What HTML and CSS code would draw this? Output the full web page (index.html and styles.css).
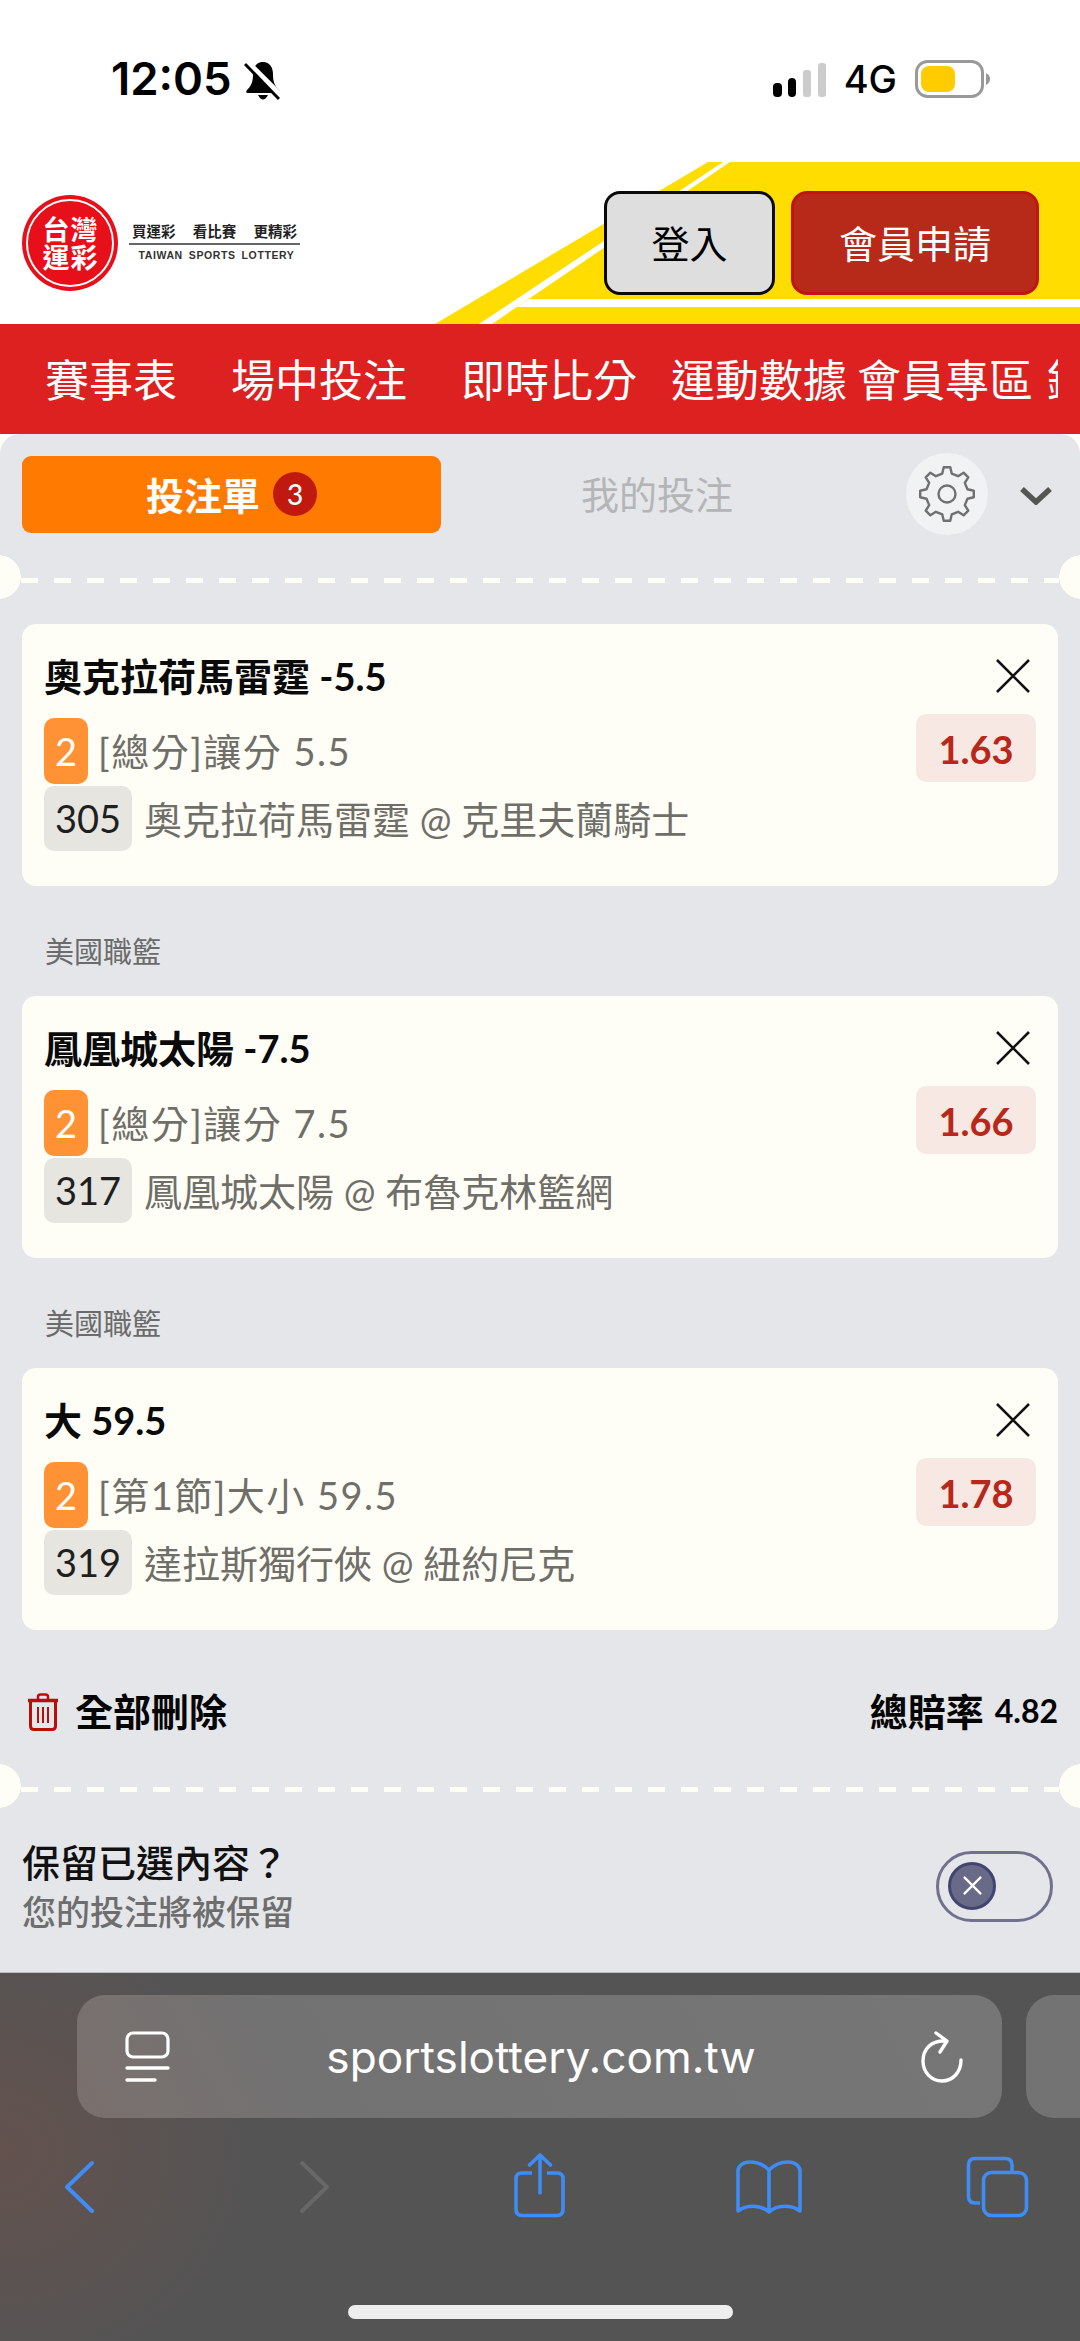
FILE: index.html
```html
<!DOCTYPE html>
<html lang="zh-Hant">
<head>
<meta charset="utf-8">
<title>台灣運彩 投注單</title>
<link rel="stylesheet" href="styles.css">
</head>
<body>
<div class="screen">
  <div class="status">
    <div class="status-left">
      <span class="time">12:05</span>
      <svg class="bell" viewBox="0 0 36 40"><path d="M19 1C12 1 9 7 9 13C9 20 8 24 3 29Q1 32 4 32H34Q37 32 35 29C30 24 29 20 29 13C29 7 26 1 19 1Z" fill="#000"/><path d="M14 34Q19 43 24 34Z" fill="#000"/><path d="M3 1L37 35" stroke="#fff" stroke-width="6"/><path d="M1 3L35 38" stroke="#000" stroke-width="3"/></svg>
    </div>
    <div class="status-right">
      <svg class="signal" viewBox="0 0 53 34"><rect x="0" y="20" width="9" height="14" rx="4" fill="#000"/><rect x="15" y="15" width="8" height="19" rx="4" fill="#000"/><rect x="30" y="7" width="8" height="27" rx="3" fill="#ccc"/><rect x="45" y="0" width="8" height="34" rx="3" fill="#ccc"/></svg>
      <span class="net">4G</span>
      <svg class="battery" viewBox="0 0 76 38"><rect x="1.5" y="1.5" width="66" height="35" rx="11" fill="none" stroke="#999" stroke-width="3"/><rect x="6" y="6" width="34" height="26" rx="8" fill="#fc0"/><path d="M71 13Q75 15 75 19Q75 23 71 25Z" fill="#999"/></svg>
    </div>
  </div>

  <header class="site-head">
    <svg class="head-art" viewBox="0 0 1080 162" preserveAspectRatio="none"><polygon points="708,0 1080,0 1080,162 435,162" fill="#ffdd00"/><polygon points="723,0 730,0 492,162 479,162" fill="#fff"/><polygon points="529,137 1080,137 1080,145 517,145" fill="#fff"/></svg>
    <div class="logo">
      <div class="seal"><div class="seal-ring"><span class="seal-line">台灣</span><span class="seal-line">運彩</span></div></div>
      <div class="logo-text">
        <div class="slogan"><span>買運彩</span><span>看比賽</span><span>更精彩</span></div>
        <div class="en">TAIWAN SPORTS LOTTERY</div>
      </div>
    </div>
    <div class="head-btns">
      <div class="btn btn-login">登入</div>
      <div class="btn btn-join">會員申請</div>
    </div>
  </header>

  <nav class="nav">
    <div class="nav-inner">
      <span class="n1">賽事表</span>
      <span class="n2">場中投注</span>
      <span class="n3">即時比分</span>
      <span class="n4">運動數據</span>
      <span class="n5">會員專區</span>
      <span class="n6">銷售據點</span>
    </div>
  </nav>

  <main class="panel">
    <div class="tabs">
      <div class="tab-on"><span class="tab-t">投注單</span><span class="badge">3</span></div>
      <div class="tab-off">我的投注</div>
      <div class="gear">
        <svg viewBox="-30 -30 60 60"><polygon points="20.46,-4.72 26.8,-3.29 26.8,3.29 20.46,4.72 17.81,11.13 21.28,16.62 16.62,21.28 11.13,17.81 4.72,20.46 3.29,26.8 -3.29,26.8 -4.72,20.46 -11.13,17.81 -16.62,21.28 -21.28,16.62 -17.81,11.13 -20.46,4.72 -26.8,3.29 -26.8,-3.29 -20.46,-4.72 -17.81,-11.13 -21.28,-16.62 -16.62,-21.28 -11.13,-17.81 -4.72,-20.46 -3.29,-26.8 3.29,-26.8 4.72,-20.46 11.13,-17.81 16.62,-21.28 21.28,-16.62 17.81,-11.13" fill="none" stroke="#707070" stroke-width="2.4" stroke-linejoin="round"/><circle r="8.5" fill="none" stroke="#707070" stroke-width="2.4"/></svg>
      </div>
      <svg class="chev" viewBox="0 0 32 18"><path d="M2 2L16 15L30 2" fill="none" stroke="#555" stroke-width="5.5"/></svg>
    </div>

    <div class="divider"></div>

    <section class="card card-first">
      <div class="card-title"><h2>奧克拉荷馬雷霆 -5.5</h2>
        <svg class="close" viewBox="0 0 34 34"><path d="M1 1L33 33M33 1L1 33" stroke="#111" stroke-width="2.6"/></svg></div>
      <div class="card-body">
        <div class="card-lines">
          <div class="line"><span class="chip-o">2</span><span class="ltext ltext-a">[總分]讓分 5.5</span></div>
          <div class="line"><span class="chip-g">305</span><span class="ltext">奧克拉荷馬雷霆 @ 克里夫蘭騎士</span></div>
        </div>
        <div class="odds">1.63</div>
      </div>
    </section>

    <div class="league">美國職籃</div>
    <section class="card">
      <div class="card-title"><h2>鳳凰城太陽 -7.5</h2>
        <svg class="close" viewBox="0 0 34 34"><path d="M1 1L33 33M33 1L1 33" stroke="#111" stroke-width="2.6"/></svg></div>
      <div class="card-body">
        <div class="card-lines">
          <div class="line"><span class="chip-o">2</span><span class="ltext ltext-a">[總分]讓分 7.5</span></div>
          <div class="line"><span class="chip-g">317</span><span class="ltext">鳳凰城太陽 @ 布魯克林籃網</span></div>
        </div>
        <div class="odds">1.66</div>
      </div>
    </section>

    <div class="league">美國職籃</div>
    <section class="card">
      <div class="card-title"><h2>大 59.5</h2>
        <svg class="close" viewBox="0 0 34 34"><path d="M1 1L33 33M33 1L1 33" stroke="#111" stroke-width="2.6"/></svg></div>
      <div class="card-body">
        <div class="card-lines">
          <div class="line"><span class="chip-o">2</span><span class="ltext ltext-a">[第1節]大小 59.5</span></div>
          <div class="line"><span class="chip-g">319</span><span class="ltext">達拉斯獨行俠 @ 紐約尼克</span></div>
        </div>
        <div class="odds">1.78</div>
      </div>
    </section>

    <div class="totals">
      <div class="del">
        <svg class="trash" viewBox="0 0 32 38"><path d="M11 7V4Q11 1.5 13.5 1.5H18.500Q21 1.500 21 4V7" fill="none" stroke="#b80f0a" stroke-width="2.500"/><path d="M1 7.500H31" stroke="#b80f0a" stroke-width="3.500"/><path d="M3.500 9V33Q3.500 36.500 7 36.500H25Q28.500 36.500 28.500 33V9" fill="none" stroke="#b80f0a" stroke-width="3"/><path d="M11 14V30M16 14V30M21 14V30" stroke="#b80f0a" stroke-width="2"/></svg>
        <span class="del-t">全部刪除</span>
      </div>
      <div class="total"><span class="total-l">總賠率</span> <span class="total-v">4.82</span></div>
    </div>

    <div class="divider divider-2"></div>

    <div class="keep">
      <div class="keep-text">
        <div class="keep-t">保留已選內容？</div>
        <div class="keep-s">您的投注將被保留</div>
      </div>
      <div class="toggle"><div class="knob"><svg viewBox="0 0 22 22"><path d="M2 2L20 20M20 2L2 20" stroke="#fff" stroke-width="2.4"/></svg></div></div>
    </div>
  </main>

  <footer class="browser">
    <div class="url-row">
      <div class="url-bar">
        <svg class="page-ic" viewBox="0 0 46 52"><rect x="2" y="2" width="41" height="24" rx="6" fill="none" stroke="#fff" stroke-width="3.200"/><path d="M2 37H43" stroke="#fff" stroke-width="3.400" stroke-linecap="round"/><path d="M2 49H30" stroke="#fff" stroke-width="3.400" stroke-linecap="round"/></svg>
        <span class="url">sportslottery.com.tw</span>
        <svg class="reload" viewBox="0 0 44 52"><path d="M24 10C11 10 3 18 3 30C3 41 11 50 22 50C33 50 41 41 41 29" fill="none" stroke="#fff" stroke-width="3.400" stroke-linecap="round"/><path d="M16 2L27 10L20 21" fill="none" stroke="#fff" stroke-width="3.400" stroke-linecap="round" stroke-linejoin="round"/></svg>
      </div>
      <div class="url-next"></div>
    </div>
    <div class="tools">
      <svg class="t-back" viewBox="62 2150 34 70"><path d="M92 2163L67 2187L92 2211" fill="none" stroke="#3f8cf5" stroke-width="4" stroke-linecap="round" stroke-linejoin="round"/></svg>
      <svg class="t-fwd" viewBox="298 2150 34 70"><path d="M302 2163L327 2187L302 2211" fill="none" stroke="#686868" stroke-width="4" stroke-linecap="round" stroke-linejoin="round"/></svg>
      <svg class="t-share" viewBox="510 2150 60 70"><path d="M532 2173H522Q516 2173 516 2179V2209Q516 2215.500 522 2215.500H557Q563 2215.500 563 2209V2179Q563 2173 557 2173H547" fill="none" stroke="#3f8cf5" stroke-width="3.600"/><path d="M540 2193V2156M529.500 2165L540 2155L550.500 2165" fill="none" stroke="#3f8cf5" stroke-width="3.600" stroke-linecap="round" stroke-linejoin="round"/></svg>
      <svg class="t-book" viewBox="733 2150 72 70"><path d="M769 2170C762 2163 755 2162 750 2162C743 2162 738 2166 738 2171V2211C746 2205 760 2204 769 2212C778 2204 792 2205 800 2211V2171C800 2166 795 2162 788 2162C783 2162 776 2163 769 2170V2212" fill="none" stroke="#3f8cf5" stroke-width="3.600" stroke-linejoin="round" stroke-linecap="round"/></svg>
      <svg class="t-tabs" viewBox="963 2150 68 70"><path d="M980 2203H975Q968.500 2203 968.500 2196V2165Q968.500 2158.500 975 2158.500H1005Q1012 2158.500 1012 2165V2171" fill="none" stroke="#3f8cf5" stroke-width="3.600"/><rect x="983.500" y="2172.500" width="43" height="43" rx="8" fill="none" stroke="#3f8cf5" stroke-width="3.600"/></svg>
    </div>
    <div class="home"></div>
  </footer>
</div>
</body>
</html>
```

FILE: styles.css
```css
* { box-sizing: border-box; }
html, body { margin: 0; padding: 0; }
body { width: 1080px; height: 2341px; overflow: hidden; background: #fffef6; font-family: "Noto Sans CJK TC", sans-serif; }
.screen { width: 1080px; height: 2341px; display: flex; flex-direction: column; overflow: hidden; }

/* status bar */
.status { height: 162px; background: #fff; display: flex; justify-content: space-between; padding: 55px 89px 0 111px; align-items: flex-start; }
.status-left, .status-right { display: flex; align-items: center; height: 48px; }
.time { font: 600 45.500px/48px Inter, sans-serif; color: #000; letter-spacing: 0; }
.bell { width: 36px; height: 40px; margin-left: 12px; margin-top: 3px; }
.signal { width: 53px; height: 34px; margin-top: 2px; }
.net { font: 500 38px/48px Inter, sans-serif; color: #000; margin-left: 18px; margin-right: 18px; }
.battery { width: 76px; height: 38px; }

/* site header */
.site-head { position: relative; height: 162px; background: #fff; display: flex; justify-content: space-between; align-items: center; padding: 0 41px 0 22px; }
.head-art { position: absolute; left: 0; top: 0; width: 1080px; height: 162px; }
.logo { position: relative; display: flex; align-items: center; }
.seal { width: 96px; height: 96px; border-radius: 50%; background: #e60f1a; display: flex; align-items: center; justify-content: center; }
.seal-ring { width: 88px; height: 88px; border-radius: 50%; border: 2px solid #fff; display: flex; flex-direction: column; align-items: center; justify-content: center; color: #fff; font-weight: 700; font-size: 27px; }
.seal-line { display: block; height: 28px; line-height: 28px; letter-spacing: 1px; padding-left: 1px; }
.logo-text { margin-left: 11px; width: 171px; }
.slogan { display: flex; justify-content: space-between; padding: 0 3px 0 3px; font-size: 14.500px; font-weight: 700; line-height: 18px; color: #222; border-bottom: 2px solid #666; height: 23px; }
.en { font: 700 10.500px/20px "Liberation Sans", sans-serif; color: #333; text-align: center; letter-spacing: 0.600px; word-spacing: 2.500px; white-space: nowrap; padding-left: 4px; }
.head-btns { position: relative; display: flex; gap: 16px; }
.btn { height: 104px; display: flex; align-items: center; justify-content: center; font-size: 38px; border-radius: 16px; padding-bottom: 4px; }
.btn-login { width: 171px; background: #dedede; border: 3px solid #0a0a0a; color: #000; }
.btn-join { width: 248px; background: #b72a1a; border: 3px solid #c0150f; color: #fff; }

/* nav */
.nav { height: 110px; background: #dd2020; padding: 0 22px; flex-shrink: 0; }
.nav-inner { height: 110px; overflow: hidden; display: flex; align-items: center; white-space: nowrap; color: #fff; font-size: 44px; line-height: 60px; padding-bottom: 2px; }
.nav-inner span { flex-shrink: 0; }
.n1 { margin-left: 23px; }
.n2 { margin-left: 54px; }
.n3 { margin-left: 54px; }
.n4 { margin-left: 34px; }
.n5 { margin-left: 10px; }
.n6 { margin-left: 14px; }

/* panel */
.panel { height: 1538px; background: #e4e6e9; border-radius: 20px 20px 0 0; padding-top: 19px; flex-shrink: 0; overflow: hidden; }
.tabs { display: flex; align-items: center; height: 82px; padding-left: 22px; }
.tab-on { width: 419px; height: 77px; background: #ff7a00; border-radius: 9px; color: #fff; font-weight: 700; font-size: 38px; display: flex; align-items: center; justify-content: center; }
.tab-t { padding-bottom: 2px; }
.badge { width: 44px; height: 44px; border-radius: 50%; background: #c01a10; color: #fff; font: 500 28px/44px Lato, sans-serif; text-align: center; margin-left: 13px; }
.tab-off { width: 432px; text-align: center; color: #b4b5b7; font-size: 38px; font-weight: 400; padding-bottom: 3px; }
.gear { width: 82px; height: 82px; border-radius: 50%; background: #f1f2f3; margin-left: 33px; display: flex; align-items: center; justify-content: center; }
.gear svg { width: 60px; height: 60px; }
.chev { width: 32px; height: 18px; margin-left: 32px; margin-top: 4px; }

.divider { position: relative; height: 44px; margin-top: 20px; }
.divider::before { content: ""; position: absolute; left: 21px; right: 21px; top: 23px; height: 5px; background: repeating-linear-gradient(90deg, #fffef6 0 17px, transparent 17px 33px); }
.divider::after { content: ""; position: absolute; left: -23px; right: -23px; top: 0; height: 44px; background: radial-gradient(circle 22px at 22px 22px, #fffef6 21.500px, transparent 22px), radial-gradient(circle 22px at calc(100% - 22px) 22px, #fffef6 21.500px, transparent 22px); }

.card { height: 262px; margin: 0 22px; background: #fffef6; border-radius: 14px; padding-top: 30px; }
.card-first { margin-top: 25px; }
.card-title { display: flex; justify-content: space-between; align-items: center; height: 44px; padding: 0 28px 0 22px; }
.card-title h2 { margin: 0; font: 700 38px/44px Lato, "Noto Sans CJK TC", sans-serif; color: #0a0a0a; }
.close { width: 34px; height: 34px; }
.card-body { display: flex; justify-content: space-between; align-items: flex-start; margin-top: 16px; padding: 0 22px; }
.card-lines { display: flex; flex-direction: column; gap: 3px; padding-top: 4px; }
.line { display: flex; align-items: center; height: 65px; }
.chip-o { width: 44px; height: 66px; border-radius: 10px; background: #ff9234; color: #fff; font: 400 38px/66px Lato, sans-serif; text-align: center; }
.chip-g { width: 88px; height: 65px; border-radius: 10px; background: #e6e5df; color: #1f1f1f; font: 400 38px/65px Lato, sans-serif; text-align: center; }
.ltext { font: 400 38px/50px Lato, "Noto Sans CJK TC", sans-serif; color: #6f6e69; margin-left: 12px; white-space: nowrap; }
.ltext-a { margin-left: 10px; letter-spacing: 1.500px; }
.odds { width: 120px; height: 68px; border-radius: 10px; background: #f8e8e3; color: #b9261a; font: 700 38px/70px Lato, sans-serif; text-align: center; }
.league { margin: 46px 0 24px 45px; height: 40px; font-size: 29px; line-height: 37px; color: #6b6b6b; }

.totals { display: flex; justify-content: space-between; align-items: center; height: 44px; margin-top: 60px; padding: 0 22px 0 27px; }
.del { display: flex; align-items: center; font-weight: 700; font-size: 38px; color: #050505; }
.del-t { padding-bottom: 6px; }
.trash { width: 32px; height: 38px; margin-right: 16px; }
.total { color: #050505; font-weight: 700; display: flex; align-items: center; }
.total-l { font-size: 38px; padding-bottom: 6px; }
.total-v { font: 700 32px/44px Lato, sans-serif; margin-left: 11px; padding-bottom: 2px; }
.divider-2 { margin-top: 30px; }

.keep { display: flex; justify-content: space-between; align-items: center; margin-top: 28px; padding: 0 27px 0 22px; }
.keep-t { font-size: 38px; line-height: 50px; font-weight: 500; color: #111; }
.keep-s { font-size: 34px; line-height: 50px; font-weight: 500; color: #6e6e6e; }
.toggle { width: 117px; height: 71px; border-radius: 36px; border: 3px solid #71718f; padding: 8px 0 0 9px; }
.knob { width: 48px; height: 48px; border-radius: 50%; background: #686a88; border: 3px solid #42456f; display: flex; align-items: center; justify-content: center; }
.knob svg { width: 21px; height: 21px; }

/* browser chrome */
.browser { flex: 1; position: relative; overflow: hidden; border-top: 1px solid #bdbdbd; background: radial-gradient(ellipse 260px 240px at 0 177px, #63524e 0%, rgba(99,82,78,0) 100%), #545454; padding-top: 22px; }
.url-row { display: flex; gap: 24px; padding-left: 77px; width: 1400px; }
.url-bar { width: 925px; height: 123px; border-radius: 28px; background: linear-gradient(60deg, #7a706d 0%, #727272 25%, #767676 100%); display: flex; align-items: center; justify-content: space-between; padding: 0 38px 0 48px; }
.page-ic { width: 46px; height: 52px; }
.url { font: 400 44.200px/60px Inter, sans-serif; color: #fff; margin-right: 9px; }
.reload { width: 44px; height: 52px; }
.url-next { width: 300px; height: 123px; border-radius: 28px; background: #737373; }
.tools { display: flex; height: 70px; margin-top: 32px; padding-left: 62px; }
.tools svg { height: 70px; flex-shrink: 0; }
.t-back { width: 34px; }
.t-fwd { width: 34px; margin-left: 202px; }
.t-share { width: 60px; margin-left: 178px; }
.t-book { width: 72px; margin-left: 163px; }
.t-tabs { width: 68px; margin-left: 158px; }
.home { width: 385px; height: 14px; border-radius: 7px; background: #eee; margin: 85px auto 0; }
```
